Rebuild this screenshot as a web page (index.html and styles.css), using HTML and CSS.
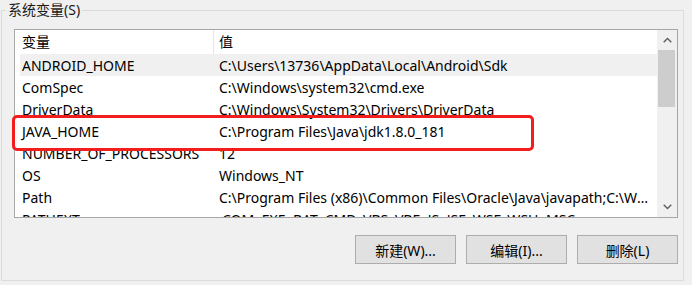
FILE: index.html
```html
<!DOCTYPE html>
<html lang="zh-CN">
<head>
<meta charset="utf-8">
<title>系统变量</title>
<link rel="stylesheet" href="styles.css">
</head>
<body>
<fieldset class="group">
  <legend class="group-title">系统变量(S)</legend>
  <div class="group-body">
    <div class="list">
      <div class="list-main">
        <div class="list-header">
          <div class="hcell name">变量</div>
          <div class="hcell value">值</div>
        </div>
        <div class="row selected"><div class="cell name">ANDROID_HOME</div><div class="cell value">C:\Users\13736\AppData\Local\Android\Sdk</div></div>
        <div class="row"><div class="cell name">ComSpec</div><div class="cell value">C:\Windows\system32\cmd.exe</div></div>
        <div class="row"><div class="cell name">DriverData</div><div class="cell value">C:\Windows\System32\Drivers\DriverData</div></div>
        <div class="row"><div class="cell name">JAVA_HOME</div><div class="cell value">C:\Program Files\Java\jdk1.8.0_181</div></div>
        <div class="row"><div class="cell name">NUMBER_OF_PROCESSORS</div><div class="cell value">12</div></div>
        <div class="row"><div class="cell name">OS</div><div class="cell value">Windows_NT</div></div>
        <div class="row"><div class="cell name">Path</div><div class="cell value">C:\Program Files (x86)\Common Files\Oracle\Java\javapath;C:\Windows\system32;C:\Windows</div></div>
        <div class="row"><div class="cell name">PATHEXT</div><div class="cell value">.COM;.EXE;.BAT;.CMD;.VBS;.VBE;.JS;.JSE;.WSF;.WSH;.MSC</div></div>
      </div>
      <div class="scrollbar">
        <div class="sb-btn">
          <svg width="9" height="6" viewBox="0 0 9 6"><path d="M0.7 5.2 L4.5 1.4 L8.3 5.2" fill="none" stroke="#606060" stroke-width="1.4"/></svg>
        </div>
        <div class="sb-track">
          <div class="sb-thumb"></div>
        </div>
        <div class="sb-btn">
          <svg width="9" height="6" viewBox="0 0 9 6"><path d="M0.7 0.8 L4.5 4.6 L8.3 0.8" fill="none" stroke="#606060" stroke-width="1.4"/></svg>
        </div>
      </div>
      <div class="highlight"></div>
    </div>
    <div class="buttons">
      <button class="btn">新建(W)...</button>
      <button class="btn">编辑(I)...</button>
      <button class="btn">删除(L)</button>
    </div>
  </div>
</fieldset>
</body>
</html>
```
FILE: styles.css
```css
html, body {
  margin: 0;
  padding: 0;
  background: #f0f0f0;
}
body {
  width: 692px;
  height: 285px;
  overflow: hidden;
  font-family: "Noto Sans", "Noto Sans CJK SC", sans-serif;
  font-size: 14px;
  color: #000;
}
.group {
  margin: 0 0 0 1px;
  padding: 0;
  width: 683px;
  box-sizing: border-box;
  border: 1px solid #dcdcdc;
  min-width: 0;
}
.group-title {
  margin-left: 4px;
  padding: 0 2px;
  line-height: 20px;
  font-size: 14px;
  color: #1a1a1a;
}
.group-body {
  padding: 9px 0 16px 12px;
}
.list {
  position: relative;
  width: 664px;
  height: 189px;
  box-sizing: border-box;
  border: 1px solid #a6a6a6;
  background: #fff;
  display: flex;
}
.list-main {
  flex: 1;
  min-width: 0;
  overflow: hidden;
}
.list-header {
  display: grid;
  grid-template-columns: 198px 1fr;
  height: 24px;
  align-items: center;
}
.hcell {
  line-height: 24px;
  height: 24px;
}
.hcell.name {
  padding-left: 7px;
}
.hcell.value {
  padding-left: 5px;
  border-left: 1px solid #e5e5e5;
}
.row {
  display: grid;
  grid-template-columns: 193px 1fr;
  margin-left: 5px;
  height: 22px;
  line-height: 23px;
}
.row.selected {
  background: #f0f0f0;
}
.cell {
  white-space: nowrap;
  overflow: hidden;
}
.cell.name {
  padding-left: 2px;
}
.cell.value {
  padding-left: 6px;
  padding-right: 6px;
  text-overflow: ellipsis;
}
.scrollbar {
  width: 20px;
  flex: none;
  background: #f0f0f0;
  display: flex;
  flex-direction: column;
}
.sb-btn {
  height: 20px;
  display: flex;
  align-items: center;
  justify-content: center;
}
.sb-track {
  flex: 1;
  padding: 0 2px 0 1px;
}
.sb-thumb {
  height: 57px;
  background: #cdcdcd;
}
.highlight {
  position: absolute;
  left: -3px;
  top: 85px;
  width: 522px;
  height: 36px;
  box-sizing: border-box;
  border: 3px solid #f21d1d;
  border-radius: 5px;
  pointer-events: none;
}
.buttons {
  display: flex;
  justify-content: flex-end;
  gap: 10px;
  width: 664px;
  margin-top: 17px;
}
.btn {
  width: 101px;
  height: 29px;
  box-sizing: border-box;
  border: 1px solid #adadad;
  background: #e1e1e1;
  font-family: "Noto Sans", "Noto Sans CJK SC", sans-serif;
  font-size: 14px;
  color: #000;
  padding: 0;
}
```
